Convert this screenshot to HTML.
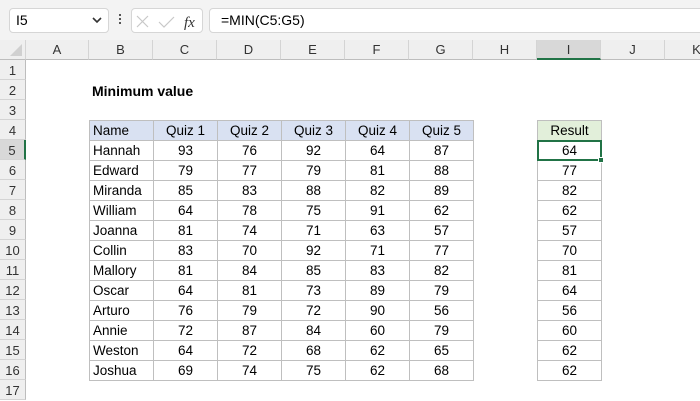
<!DOCTYPE html>
<html><head><meta charset="utf-8"><style>
*{margin:0;padding:0;box-sizing:border-box}
body{width:700px;height:400px;overflow:hidden;background:#fff;font-family:"Liberation Sans",Arial,sans-serif;font-size:13px;color:#000;position:relative}
.top{position:absolute;left:0;top:0;width:700px;height:40px;background:#f3f3f3}
.nb{position:absolute;left:9px;top:8px;width:100px;height:25px;background:#fff;border:1px solid #d6d6d6;border-radius:4px;font-size:14px;line-height:23px;padding-left:6px}
.fx{position:absolute;left:131px;top:8px;width:72px;height:25px;background:#fff;border:1px solid #d6d6d6;border-radius:4px}
.fb{position:absolute;left:209px;top:8px;width:495px;height:25px;background:#fff;border:1px solid #d6d6d6;border-radius:4px;line-height:23px;padding-left:11px;font-size:14px}
.ch{position:absolute;top:40px;height:20px;background:#efefef;border-right:1px solid #d4d4d4;border-bottom:1px solid #bdbdbd;text-align:center;line-height:20px;color:#333;font-size:13px}
.rh{position:absolute;left:0;width:26px;height:20px;background:#efefef;border-bottom:1px solid #d4d4d4;border-right:1px solid #bdbdbd;text-align:center;line-height:21px;color:#333;font-size:13px}
table{position:absolute;border-collapse:collapse}
td{border:1px solid #bfbfbf;height:20px;width:64px;text-align:center;padding:1px 0 0 0;font-size:13.5px;line-height:18px}
td.n{text-align:left;padding-left:3px}
tr.h td{background:#d9e1f2}
</style></head><body>
<div class="top"></div>
<div class="nb">I5<svg style="position:absolute;right:6px;top:8px" width="10" height="7"><path d="M1 1L5 5L9 1" stroke="#333" stroke-width="1.6" fill="none"/></svg></div>
<div style="position:absolute;left:119px;top:14px;width:2px;height:2px;background:#555;box-shadow:0 4px #555,0 8px #555"></div>
<div class="fx"><svg width="72" height="25"><path d="M5 7L16 18M16 7L5 18" stroke="#c8c8c8" stroke-width="1.2"/><path d="M27 13L32 18L42 8" stroke="#c8c8c8" stroke-width="1.2" fill="none"/><text x="52" y="18" font-family="Liberation Serif" font-style="italic" font-size="15" fill="#333">fx</text></svg></div>
<div class="fb">=MIN(C5:G5)</div>
<div class="ch" style="left:0;width:26px"><svg width="26" height="20" style="position:absolute;left:0;top:0"><path d="M22 4L22 16L10 16Z" fill="#d0d0d0"/></svg></div>
<div class="ch" style="left:26px;width:63px">A</div>
<div class="ch" style="left:89px;width:64px">B</div>
<div class="ch" style="left:153px;width:64px">C</div>
<div class="ch" style="left:217px;width:64px">D</div>
<div class="ch" style="left:281px;width:64px">E</div>
<div class="ch" style="left:345px;width:64px">F</div>
<div class="ch" style="left:409px;width:64px">G</div>
<div class="ch" style="left:473px;width:64px">H</div>
<div class="ch" style="left:537px;width:64px;background:#d8d8d8;border-bottom:2px solid #217346">I</div>
<div class="ch" style="left:601px;width:64px">J</div>
<div class="ch" style="left:665px;width:64px">K</div>
<div class="rh" style="top:60px">1</div><div class="rh" style="top:80px">2</div><div class="rh" style="top:100px">3</div><div class="rh" style="top:120px">4</div>
<div class="rh" style="top:140px;background:#d8d8d8;border-right:2px solid #217346">5</div>
<div class="rh" style="top:160px">6</div><div class="rh" style="top:180px">7</div><div class="rh" style="top:200px">8</div><div class="rh" style="top:220px">9</div><div class="rh" style="top:240px">10</div><div class="rh" style="top:260px">11</div><div class="rh" style="top:280px">12</div><div class="rh" style="top:300px">13</div><div class="rh" style="top:320px">14</div><div class="rh" style="top:340px">15</div><div class="rh" style="top:360px">16</div><div class="rh" style="top:380px">17</div>
<div style="position:absolute;left:92px;top:83px;font-weight:bold;font-size:14px">Minimum value</div>
<table style="left:89px;top:120px">
<tr class="h"><td class="n">Name</td><td>Quiz 1</td><td>Quiz 2</td><td>Quiz 3</td><td>Quiz 4</td><td>Quiz 5</td></tr>
<tr><td class="n">Hannah</td><td>93</td><td>76</td><td>92</td><td>64</td><td>87</td></tr>
<tr><td class="n">Edward</td><td>79</td><td>77</td><td>79</td><td>81</td><td>88</td></tr>
<tr><td class="n">Miranda</td><td>85</td><td>83</td><td>88</td><td>82</td><td>89</td></tr>
<tr><td class="n">William</td><td>64</td><td>78</td><td>75</td><td>91</td><td>62</td></tr>
<tr><td class="n">Joanna</td><td>81</td><td>74</td><td>71</td><td>63</td><td>57</td></tr>
<tr><td class="n">Collin</td><td>83</td><td>70</td><td>92</td><td>71</td><td>77</td></tr>
<tr><td class="n">Mallory</td><td>81</td><td>84</td><td>85</td><td>83</td><td>82</td></tr>
<tr><td class="n">Oscar</td><td>64</td><td>81</td><td>73</td><td>89</td><td>79</td></tr>
<tr><td class="n">Arturo</td><td>76</td><td>79</td><td>72</td><td>90</td><td>56</td></tr>
<tr><td class="n">Annie</td><td>72</td><td>87</td><td>84</td><td>60</td><td>79</td></tr>
<tr><td class="n">Weston</td><td>64</td><td>72</td><td>68</td><td>62</td><td>65</td></tr>
<tr><td class="n">Joshua</td><td>69</td><td>74</td><td>75</td><td>62</td><td>68</td></tr>
</table>
<table style="left:537px;top:120px">
<tr><td style="background:#e2efda">Result</td></tr>
<tr><td>64</td></tr><tr><td>77</td></tr><tr><td>82</td></tr><tr><td>62</td></tr><tr><td>57</td></tr><tr><td>70</td></tr><tr><td>81</td></tr><tr><td>64</td></tr><tr><td>56</td></tr><tr><td>60</td></tr><tr><td>62</td></tr><tr><td>62</td></tr>
</table>
<div style="position:absolute;left:537px;top:140px;width:65px;height:21px;border:2px solid #217346"></div>
<div style="position:absolute;left:598px;top:157px;width:6px;height:6px;background:#217346;border:1px solid #fff"></div>
</body></html>
